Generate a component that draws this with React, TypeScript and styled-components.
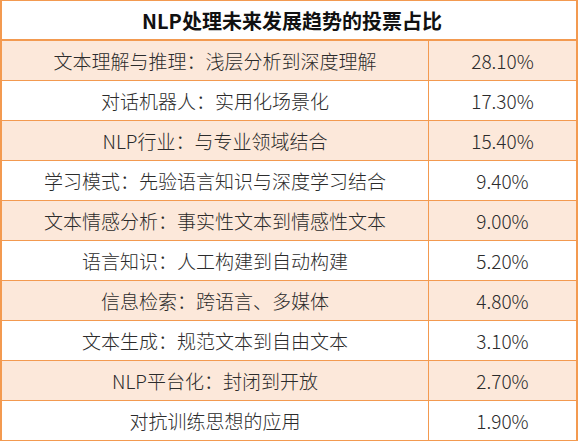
import * as React from 'react'
import styled, { createGlobalStyle } from 'styled-components'

const Color = {
  Line: '#f39a50',
  Peach: '#fce8da',
  Text: '#2b2b2b',
  Title: '#111111'
}

const rows = [
  { label: '文本理解与推理：浅层分析到深度理解', value: '28.10%' },
  { label: '对话机器人：实用化场景化', value: '17.30%' },
  { label: 'NLP行业：与专业领域结合', value: '15.40%' },
  { label: '学习模式：先验语言知识与深度学习结合', value: '9.40%' },
  { label: '文本情感分析：事实性文本到情感性文本', value: '9.00%' },
  { label: '语言知识：人工构建到自动构建', value: '5.20%' },
  { label: '信息检索：跨语言、多媒体', value: '4.80%' },
  { label: '文本生成：规范文本到自由文本', value: '3.10%' },
  { label: 'NLP平台化：封闭到开放', value: '2.70%' },
  { label: '对抗训练思想的应用', value: '1.90%' }
]

const App = () => {
  return (
    <>
      <GlobalStyle />
      <Table>
        <Title>NLP处理未来发展趋势的投票占比</Title>
        {rows.map((row, i) => (
          <Row key={row.label} shaded={i % 2 === 0}>
            <Label>{row.label}</Label>
            <Value>{row.value}</Value>
          </Row>
        ))}
      </Table>
    </>
  )
}

const GlobalStyle = createGlobalStyle`
  html, body {
    margin: 0;
    padding: 0;
    background: #ffffff;
  }
  body {
    font-family: "Noto Sans CJK SC", "Noto Sans", sans-serif;
  }
`

const Table = styled.div`
  width: 578px;
  box-sizing: border-box;
  border-top: 1px solid ${Color.Line};
  border-left: 2px solid ${Color.Line};
  border-right: 2px solid ${Color.Line};
`

const Title = styled.div`
  height: 38px;
  border-bottom: 2px solid ${Color.Line};
  display: flex;
  align-items: center;
  justify-content: center;
  font-size: 20px;
  font-weight: 700;
  color: ${Color.Title};
  padding-left: 6px;
`

const Row = styled.div<{ shaded: boolean }>`
  display: grid;
  grid-template-columns: 427px 1fr;
  height: 39px;
  border-bottom: 1px solid ${Color.Line};
  background: ${(p) => (p.shaded ? Color.Peach : '#ffffff')};
`

const Cell = styled.div`
  display: flex;
  align-items: center;
  justify-content: center;
  font-size: 19px;
  font-weight: 300;
  color: ${Color.Text};
  white-space: nowrap;
`

const Label = styled(Cell)`
  border-right: 1px solid ${Color.Line};
`

const Value = styled(Cell)``

export default App
